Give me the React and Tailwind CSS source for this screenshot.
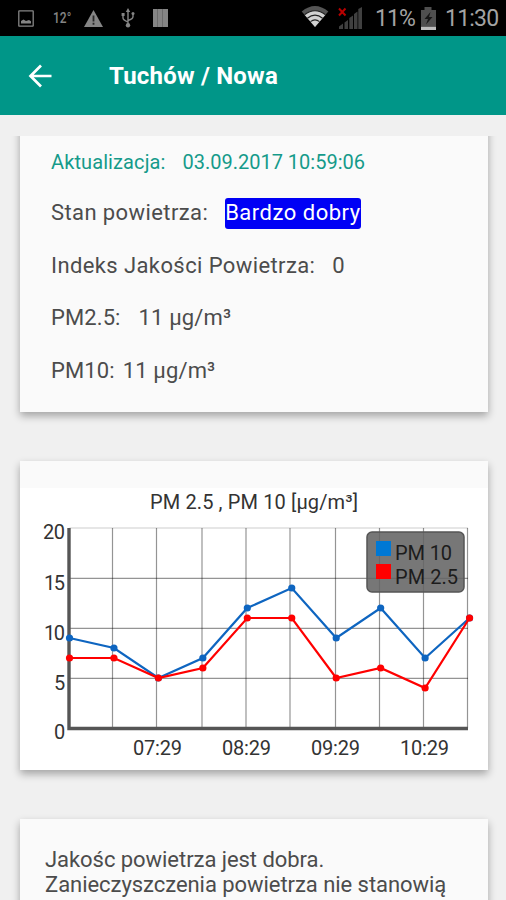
import React from 'react';

const pm10 = [9, 8, 5, 7, 12, 14, 9, 12, 7, 11];
const pm25 = [7, 7, 5, 6, 11, 11, 5, 6, 4, 11];

// Plot area inside the 468x282 chart
const LEFT = 49.5;
const BOTTOM = 240;
const STEP = 44.45;

const gridX = [92.5, 136.5, 182, 226, 270, 315.5, 359.5, 403.5, 447.5];
const gridY = [40, 90.3, 140.3, 190.3];

const yLabels = [
  { text: '20', x: 23, y: 51, width: 22 },
  { text: '15', x: 24, y: 101.5, width: 21 },
  { text: '10', x: 24, y: 151.5, width: 21 },
  { text: '5', x: 34, y: 202, width: 10.5 },
  { text: '0', x: 34, y: 251, width: 11 },
];

const xLabels = [
  { text: '07:29', x: 113 },
  { text: '08:29', x: 202 },
  { text: '09:29', x: 291 },
  { text: '10:29', x: 380 },
];

const px = (i) => LEFT + i * STEP;
const py = (value) => BOTTOM - value * 10;

function StatusBar() {
  return (
    <div className="flex h-9 shrink-0 items-center justify-between bg-black pl-[18px] pr-[7px]">
      <div className="flex items-center text-[#858585]">
        <svg width="16" height="17" viewBox="0 0 16 17" fill="none">
          <rect x="0.8" y="0.8" width="14.4" height="15.4" rx="0.5" stroke="currentColor" strokeWidth="1.3" />
          <path d="M3 13.5V11l2.5-1.5L8 11l3-1 2 1.2v2.3z" fill="currentColor" />
        </svg>
        <span className="ml-[19px] w-[14px] origin-left scale-x-[0.8] whitespace-nowrap text-[15px] font-medium leading-none">12°</span>
        <svg className="ml-[17px]" width="19" height="17" viewBox="0 0 19 17">
          <path d="M9.5 0L19 17H0z" fill="currentColor" />
          <path d="M9.5 5.5v6M9.5 12.7v2" stroke="#000" strokeOpacity="0.7" strokeWidth="1.8" />
        </svg>
        <svg className="ml-[18px]" width="14" height="20" viewBox="0 0 14 20" fill="none" stroke="currentColor" strokeWidth="1.4">
          <path d="M7 3v14M2 7v3q0 2 5 4M12 6v2.5q0 2.5-5 4" />
          <path d="M7 0l2.2 4H4.8zM0.6 5h3v3h-3z" fill="currentColor" stroke="none" />
          <circle cx="12" cy="5.5" r="1.5" fill="currentColor" stroke="none" />
          <circle cx="7" cy="17.3" r="2.2" fill="currentColor" stroke="none" />
        </svg>
        <svg className="ml-[18px]" width="15" height="18" viewBox="0 0 15 18">
          <path d="M0 0h15v18H0z" fill="currentColor" />
          <path d="M4.5 0v18M9.5 0v18" stroke="#666" strokeWidth="0.8" />
        </svg>
      </div>

      <div className="flex items-center text-[#a3a3a3]">
        <svg className="mb-[3px]" width="28" height="21" viewBox="0 0 28 21">
          <path d="M0.7 5.5Q14-5.5 27.3 5.5L14 21z" fill="#555" />
          <path d="M3.5 8.7Q14 0.7 24.5 8.7L14 21z" fill="#d2d2d2" />
          <path d="M3.5 8.8Q14 0.8 24.5 8.8M6.4 12.2Q14 6 21.6 12.2M9.5 15.7Q14 12 18.5 15.7" stroke="#222" strokeWidth="1.1" fill="none" />
        </svg>
        <svg className="ml-[9px]" width="25" height="22" viewBox="0 0 25 22">
          <path d="M1 19.5L5 16.5V22H1zM6.5 15.5l3.5-2.5v9H6.5zM11.3 11L15 8.5V22h-3.7zM16 7l3.5-2.5V22H16zM20.3 2L24 0v22h-3.7z" fill="#404040" />
          <path d="M1 1.5l6.5 7M7.5 1.5l-6.5 7" stroke="#b80000" strokeWidth="2" />
        </svg>
        <span className="ml-[12px] w-[40px] whitespace-nowrap text-[23px] leading-none tracking-[-0.9px]">11%</span>
        <svg className="ml-[5px]" width="17" height="23" viewBox="0 0 17 23">
          <path d="M4.5 0h7v3H16v16H1V3h3.5z" fill="#4f4f4f" />
          <path d="M10.5 5L4.5 12h3.5l-2 5.5L12.5 10H9z" fill="#161616" />
          <path d="M1 19.5h15V23H1z" fill="#bdbdbd" />
        </svg>
        <span className="ml-[8px] w-[54px] whitespace-nowrap text-[23px] leading-none tracking-[-0.8px]">11:30</span>
      </div>
    </div>
  );
}

function Header() {
  return (
    <header className="flex h-[78.5px] shrink-0 items-center bg-[#009688] pl-[28px] pt-[1px] text-white">
      <svg width="24" height="24" viewBox="0 0 24 24" fill="none" stroke="currentColor" strokeWidth="2.7">
        <path d="M23.5 12H3M13 1.5L2.5 12 13 22.5" />
      </svg>
      <h1 className="ml-[57px] pt-[1px] text-[24px] font-bold leading-none tracking-[0.2px]">Tuchów / Nowa</h1>
    </header>
  );
}

function Card({ className, children }) {
  return (
    <section className={`mx-auto w-[468px] shrink-0 bg-[#fafafa] shadow-[0_4px_8px_rgba(0,0,0,0.32)] ${className}`}>
      {children}
    </section>
  );
}

function Row({ label, labelClass, valueClass, children }) {
  return (
    <div className="flex h-[52.5px] items-center whitespace-nowrap text-[22px] leading-none tracking-[0.4px]">
      <span className={labelClass}>{label}</span>
      <span className={valueClass}>{children}</span>
    </div>
  );
}

function Series({ values, color }) {
  return (
    <g fill={color}>
      <polyline
        points={values.map((v, i) => `${px(i)},${py(v)}`).join(' ')}
        fill="none"
        stroke={color}
        strokeWidth="2.2"
      />
      {values.map((v, i) => (
        <circle key={i} cx={px(i)} cy={py(v)} r="3.6" />
      ))}
    </g>
  );
}

function Chart() {
  return (
    <svg className="block bg-white" width="468" height="282" viewBox="0 0 468 282" fontSize="20" fill="#333">
      <text x="130" y="21" textLength="208" lengthAdjust="spacing">PM 2.5 , PM 10 [μg/m³]</text>

      <g stroke="#000" strokeOpacity="0.42" strokeWidth="1.2">
        {gridX.map((x) => (
          <line key={x} x1={x} x2={x} y1="40" y2={BOTTOM} />
        ))}
        {gridY.map((y) => (
          <line key={y} x1={LEFT} x2="448" y1={y} y2={y} strokeOpacity={y === 40 ? 0.2 : 0.42} />
        ))}
      </g>
      <path d="M49 40v200.5h399" fill="none" stroke="#555" strokeWidth="3.4" />

      {yLabels.map((label) => (
        <text key={label.text} x={label.x} y={label.y} textLength={label.width}>{label.text}</text>
      ))}
      {xLabels.map((label) => (
        <text key={label.text} x={label.x} y="267" textLength="49">{label.text}</text>
      ))}

      <Series values={pm10} color="#0e65c0" />
      <Series values={pm25} color="#ff0000" />

      {/* Legend */}
      <rect x="347" y="44" width="97" height="60" rx="5" fill="#646464" fillOpacity="0.88" stroke="#555" strokeWidth="1.5" />
      <rect x="356" y="53" width="15" height="15" fill="#0078d4" />
      <rect x="356" y="76" width="15" height="15" fill="#ff0000" />
      <text x="375" y="72" textLength="57" fill="#1c1c1c">PM 10</text>
      <text x="375" y="96" textLength="63" fill="#1c1c1c">PM 2.5</text>
    </svg>
  );
}

function App() {
  return (
    <div className="flex h-[900px] w-[506px] flex-col overflow-hidden bg-[#f0f0f0] font-['Roboto',sans-serif] text-[#4c4c4c]">
      <StatusBar />
      <Header />

      <main className="mt-[21.5px] flex min-h-0 flex-1 flex-col overflow-hidden pl-[2px]">
        <Card className="-mt-4 h-[292px] pl-[31px] pt-[17px]">
          <div className="flex h-[50px] items-center whitespace-nowrap text-[20px] leading-none text-[#159a8a]">
            <span className="tracking-[0.1px]">Aktualizacja:</span>
            <span className="ml-[17px]">03.09.2017 10:59:06</span>
          </div>
          <Row
            label="Stan powietrza:"
            valueClass="ml-[17px] flex h-[31px] items-center rounded-[3px] bg-[#0000f5] tracking-[0.5px] text-white"
          >
            Bardzo dobry
          </Row>
          <Row label="Indeks Jakości Powietrza:" valueClass="ml-[17px]">0</Row>
          <Row label="PM2.5:" labelClass="tracking-[0.1px]" valueClass="ml-[18px] tracking-[0.15px]">11 μg/m³</Row>
          <Row label="PM10:" labelClass="tracking-[0.1px]" valueClass="ml-[8px] tracking-[0.15px]">11 μg/m³</Row>
        </Card>

        <Card className="mt-[49px] h-[309px] pt-[27px]">
          <Chart />
        </Card>

        <Card className="mt-[49px] h-[160px] pl-[25px] pt-[28px]">
          <p className="whitespace-nowrap text-[22px] leading-[25px] tracking-[-0.05px]">
            Jakośc powietrza jest dobra.
            <br />
            Zanieczyszczenia powietrza nie stanowią
          </p>
        </Card>
      </main>
    </div>
  );
}

export default App;
